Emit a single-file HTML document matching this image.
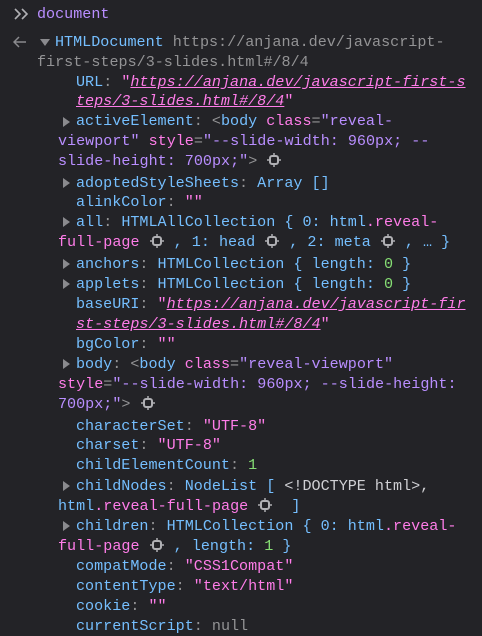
<!DOCTYPE html><html><head><style>
body{margin:0;background:#232327;width:482px;height:635px;overflow:hidden;font-family:"Liberation Mono",monospace;font-size:15.1px;color:#e0e0e2}
.l{position:absolute;white-space:pre;line-height:20px}
.b{color:#75bfff}.p{color:#ff7de9}.v{color:#b98eff}.g{color:#939395}.n{color:#86de74}
.u{color:#ff7de9;font-style:italic;text-decoration:underline}
.t{position:absolute;width:0;height:0;border-top:5px solid transparent;border-bottom:5px solid transparent;border-left:7px solid #8a8a8e}
.ic{display:inline-block;width:14px;height:14px;vertical-align:-2px;margin:0 1px}
</style></head><body>
<svg style="position:absolute;left:13px;top:7px" width="18" height="14" viewBox="0 0 18 14"><path d="M2 2l5 5-5 5M9 2l5 5-5 5" fill="none" stroke="#b0b0b4" stroke-width="1.6"/></svg>
<div class="l v" style="left:37px;top:4px">document</div>
<svg style="position:absolute;left:13px;top:36px" width="14" height="12" viewBox="0 0 14 12"><path d="M13 6H2M6 1L1 6l5 5" fill="none" stroke="#8a8a8e" stroke-width="1.5"/></svg>
<div style="position:absolute;left:40px;top:39px;width:0;height:0;border-left:5px solid transparent;border-right:5px solid transparent;border-top:7px solid #8a8a8e"></div>
<div class="l" style="left:55px;top:32px"><span class="b">HTMLDocument</span> <span class="g">https://anjana.dev/javascript-</span></div>
<div class="l g" style="left:37px;top:52px">first-steps/3-slides.html#/8/4</div>
<div class="l" style="left:76px;top:72px"><span class="b">URL</span><span class="g">: </span><span class="p">"</span><span class="u">https://anjana.dev/javascript-first-s</span></div>
<div class="l" style="left:76px;top:91px"><span class="u">teps/3-slides.html#/8/4</span><span class="p">"</span></div>
<div class="t" style="left:63px;top:117px"></div>
<div class="l" style="left:76px;top:111px"><span class="b">activeElement</span><span class="g">: </span><span class="g">&lt;</span><span class="b">body</span> <span class="p">class</span><span class="g">=</span><span class="v">"reveal-</span></div>
<div class="l v" style="left:58px;top:131px">viewport" <span class="p">style</span><span class="g">=</span>"--slide-width: 960px; --</div>
<div class="l" style="left:58px;top:151px"><span class="v">slide-height: 700px;"</span><span class="g">&gt;</span> <svg class="ic" viewBox="0 0 14 14"><rect x="3" y="3" width="8" height="8" rx="2" fill="none" stroke="#b0b0b4" stroke-width="2"/><path d="M7 0v3M7 11v3M0 7h3M11 7h3" stroke="#b0b0b4" stroke-width="1.5"/></svg></div>
<div class="t" style="left:63px;top:178px"></div>
<div class="l" style="left:76px;top:173px"><span class="b">adoptedStyleSheets</span><span class="g">: </span><span class="b">Array []</span></div>
<div class="l" style="left:76px;top:192px"><span class="b">alinkColor</span><span class="g">: </span><span class="p">""</span></div>
<div class="t" style="left:63px;top:217px"></div>
<div class="l" style="left:76px;top:212px"><span class="b">all</span><span class="g">: </span><span class="b">HTMLAllCollection { 0: html</span><span class="p">.reveal-</span></div>
<div class="l" style="left:58px;top:232px"><span class="p">full-page</span> <svg class="ic" viewBox="0 0 14 14"><rect x="3" y="3" width="8" height="8" rx="2" fill="none" stroke="#b0b0b4" stroke-width="2"/><path d="M7 0v3M7 11v3M0 7h3M11 7h3" stroke="#b0b0b4" stroke-width="1.5"/></svg><span class="b"> , 1: head </span><svg class="ic" viewBox="0 0 14 14"><rect x="3" y="3" width="8" height="8" rx="2" fill="none" stroke="#b0b0b4" stroke-width="2"/><path d="M7 0v3M7 11v3M0 7h3M11 7h3" stroke="#b0b0b4" stroke-width="1.5"/></svg><span class="b"> , 2: meta </span><svg class="ic" viewBox="0 0 14 14"><rect x="3" y="3" width="8" height="8" rx="2" fill="none" stroke="#b0b0b4" stroke-width="2"/><path d="M7 0v3M7 11v3M0 7h3M11 7h3" stroke="#b0b0b4" stroke-width="1.5"/></svg><span class="b"> , … }</span></div>
<div class="t" style="left:63px;top:259px"></div>
<div class="l" style="left:76px;top:254px"><span class="b">anchors</span><span class="g">: </span><span class="b">HTMLCollection { length: </span><span class="n">0</span><span class="b"> }</span></div>
<div class="t" style="left:63px;top:279px"></div>
<div class="l" style="left:76px;top:274px"><span class="b">applets</span><span class="g">: </span><span class="b">HTMLCollection { length: </span><span class="n">0</span><span class="b"> }</span></div>
<div class="l" style="left:76px;top:294px"><span class="b">baseURI</span><span class="g">: </span><span class="p">"</span><span class="u">https://anjana.dev/javascript-fir</span></div>
<div class="l" style="left:76px;top:314px"><span class="u">st-steps/3-slides.html#/8/4</span><span class="p">"</span></div>
<div class="l" style="left:76px;top:334px"><span class="b">bgColor</span><span class="g">: </span><span class="p">""</span></div>
<div class="t" style="left:63px;top:359px"></div>
<div class="l" style="left:76px;top:354px"><span class="b">body</span><span class="g">: &lt;</span><span class="b">body</span> <span class="p">class</span><span class="g">=</span><span class="v">"reveal-viewport"</span></div>
<div class="l v" style="left:58px;top:374px"><span class="p">style</span><span class="g">=</span>"--slide-width: 960px; --slide-height:</div>
<div class="l" style="left:58px;top:394px"><span class="v">700px;"</span><span class="g">&gt;</span> <svg class="ic" viewBox="0 0 14 14"><rect x="3" y="3" width="8" height="8" rx="2" fill="none" stroke="#b0b0b4" stroke-width="2"/><path d="M7 0v3M7 11v3M0 7h3M11 7h3" stroke="#b0b0b4" stroke-width="1.5"/></svg></div>
<div class="l" style="left:76px;top:416px"><span class="b">characterSet</span><span class="g">: </span><span class="p">"UTF-8"</span></div>
<div class="l" style="left:76px;top:435px"><span class="b">charset</span><span class="g">: </span><span class="p">"UTF-8"</span></div>
<div class="l" style="left:76px;top:455px"><span class="b">childElementCount</span><span class="g">: </span><span class="n">1</span></div>
<div class="t" style="left:63px;top:481px"></div>
<div class="l" style="left:76px;top:476px"><span class="b">childNodes</span><span class="g">: </span><span class="b">NodeList [ </span><span style="color:#d0d0d4">&lt;!DOCTYPE html&gt;,</span></div>
<div class="l" style="left:58px;top:496px"><span class="b">html</span><span class="p">.reveal-full-page</span> <svg class="ic" viewBox="0 0 14 14"><rect x="3" y="3" width="8" height="8" rx="2" fill="none" stroke="#b0b0b4" stroke-width="2"/><path d="M7 0v3M7 11v3M0 7h3M11 7h3" stroke="#b0b0b4" stroke-width="1.5"/></svg><span class="b">  ]</span></div>
<div class="t" style="left:63px;top:521px"></div>
<div class="l" style="left:76px;top:516px"><span class="b">children</span><span class="g">: </span><span class="b">HTMLCollection { 0: html</span><span class="p">.reveal-</span></div>
<div class="l" style="left:58px;top:536px"><span class="p">full-page</span> <svg class="ic" viewBox="0 0 14 14"><rect x="3" y="3" width="8" height="8" rx="2" fill="none" stroke="#b0b0b4" stroke-width="2"/><path d="M7 0v3M7 11v3M0 7h3M11 7h3" stroke="#b0b0b4" stroke-width="1.5"/></svg><span class="b"> , length: </span><span class="n">1</span><span class="b"> }</span></div>
<div class="l" style="left:76px;top:556px"><span class="b">compatMode</span><span class="g">: </span><span class="p">"CSS1Compat"</span></div>
<div class="l" style="left:76px;top:576px"><span class="b">contentType</span><span class="g">: </span><span class="p">"text/html"</span></div>
<div class="l" style="left:76px;top:596px"><span class="b">cookie</span><span class="g">: </span><span class="p">""</span></div>
<div class="l" style="left:76px;top:616px"><span class="b">currentScript</span><span class="g">: null</span></div>
</body></html>
